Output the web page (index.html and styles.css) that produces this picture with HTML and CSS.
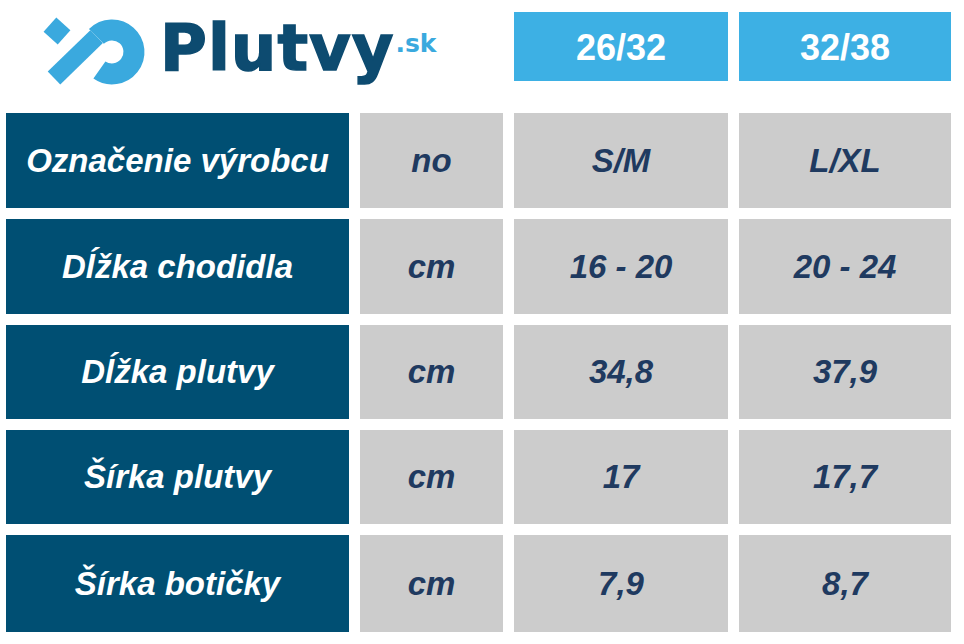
FILE: index.html
```html
<!DOCTYPE html>
<html lang="sk">
<head>
<meta charset="utf-8">
<title>Plutvy.sk – tabuľka veľkostí</title>
<link rel="stylesheet" href="styles.css">
</head>
<body>
<div class="page">
  <div class="head-grid">
    <div class="logo">
      <svg class="logo-mark" width="108" height="74" viewBox="40 14 108 74" aria-hidden="true">
        <rect x="47.5" y="21.5" width="19" height="19" transform="rotate(42 57 31)" fill="#3aa9de"/>
        <path d="M54 78 L96.6 36.6" fill="none" stroke="#3aa9de" stroke-width="18"/>
        <path d="M96.4 36.4 A22 22 0 1 1 99.4 70" fill="none" stroke="#3aa9de" stroke-width="21"/>
      </svg>
      <span class="logo-word">Plutvy</span>
      <span class="logo-tld">.sk</span>
    </div>
    <div class="hcell">26/32</div>
    <div class="hcell">32/38</div>
  </div>
  <div class="grid">
    <div class="label">Označenie výrobcu</div>
    <div class="val">no</div>
    <div class="val">S/M</div>
    <div class="val">L/XL</div>

    <div class="label">Dĺžka chodidla</div>
    <div class="val">cm</div>
    <div class="val">16 - 20</div>
    <div class="val">20 - 24</div>

    <div class="label">Dĺžka plutvy</div>
    <div class="val">cm</div>
    <div class="val">34,8</div>
    <div class="val">37,9</div>

    <div class="label">Šírka plutvy</div>
    <div class="val">cm</div>
    <div class="val">17</div>
    <div class="val">17,7</div>

    <div class="label">Šírka botičky</div>
    <div class="val">cm</div>
    <div class="val">7,9</div>
    <div class="val">8,7</div>
  </div>
</div>
</body>
</html>
```
FILE: styles.css
```css
html, body {
  margin: 0;
  padding: 0;
  background: #ffffff;
}
.page {
  width: 964px;
  height: 644px;
  padding: 12px 0 0 6px;
  box-sizing: border-box;
  font-family: "Liberation Sans", Arial, sans-serif;
  overflow: hidden;
}
.head-grid {
  display: grid;
  grid-template-columns: 343px 143px 214px 212px;
  column-gap: 11px;
  grid-template-rows: 69px;
}
.logo {
  grid-column: 1 / 3;
  display: flex;
  align-items: flex-start;
  position: relative;
}
.logo-mark {
  display: block;
  margin: 2px 0 0 34px;
  flex: none;
}
.logo-word {
  font-family: "DejaVu Sans", sans-serif;
  font-weight: bold;
  font-size: 64px;
  line-height: 64px;
  letter-spacing: 1px;
  color: #0d4b70;
  -webkit-text-stroke: 1.5px #0d4b70;
  margin: 4px 0 0 12px;
  white-space: nowrap;
}
.logo-tld {
  font-family: "DejaVu Sans", sans-serif;
  font-weight: bold;
  font-size: 25px;
  line-height: 25px;
  color: #3aa9de;
  margin: 19px 0 0 1px;
  white-space: nowrap;
}
.hcell {
  background: #3db0e4;
  color: #ffffff;
  font-weight: bold;
  font-size: 36px;
  display: flex;
  align-items: center;
  justify-content: center;
  padding-top: 3px;
  box-sizing: border-box;
}
.grid {
  display: grid;
  grid-template-columns: 343px 143px 214px 212px;
  grid-template-rows: 95px 95px 94px 94px 97px;
  column-gap: 11px;
  row-gap: 11px;
  margin-top: 32px;
}
.label, .val {
  display: flex;
  align-items: center;
  justify-content: center;
  font-weight: bold;
  font-style: italic;
  font-size: 33px;
  white-space: nowrap;
}
.label {
  background: #004f73;
  color: #ffffff;
}
.val {
  background: #cccccc;
  color: #1f3a60;
}
```
